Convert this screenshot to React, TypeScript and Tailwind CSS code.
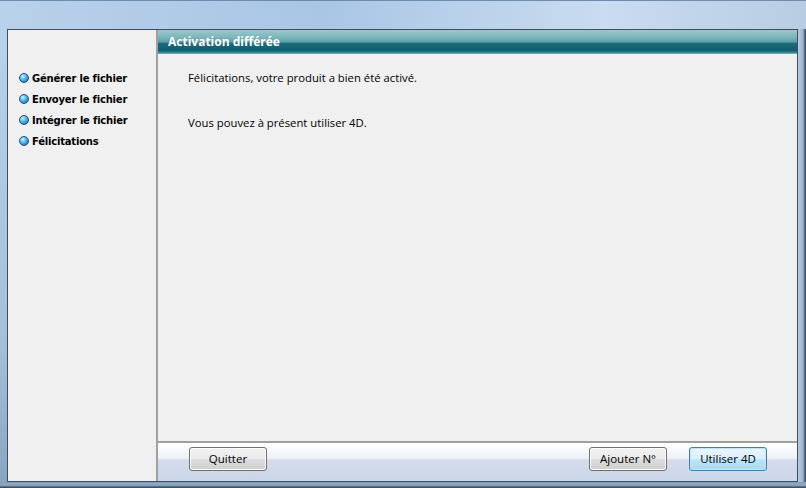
import React from 'react';

const steps = ['Générer le fichier', 'Envoyer le fichier', 'Intégrer le fichier', 'Félicitations'];

function Bullet() {
  return (
    <span className="w-[10px] h-[10px] rounded-full border border-[#2a4c74] bg-[radial-gradient(circle_at_35%_30%,#d6f4ff_0%,#5fc4f4_35%,#1f86d0_75%,#1a5a9a_100%)] shrink-0" />
  );
}

function WinButton({ label, focused }: { label: string; focused?: boolean }) {
  return (
    <button
      type="button"
      className={
        'w-[78px] h-[24px] rounded-[3px] border text-[11.5px] text-black leading-none flex items-center justify-center ' +
        (focused
          ? 'border-[#3c7fb1] bg-[linear-gradient(to_bottom,#eaf6fd_0%,#d9f0fc_50%,#bee6fd_50%,#a7d9f5_100%)] shadow-[inset_0_0_0_1px_#c4e5f6]'
          : 'border-[#707070] bg-[linear-gradient(to_bottom,#f2f2f2_0%,#ebebeb_50%,#dddddd_50%,#cfcfcf_100%)] shadow-[inset_0_0_0_1px_#fcfcfc]')
      }
      style={{ fontFamily: '"Open Sans", "Noto Sans", sans-serif' }}
    >
      {label}
    </button>
  );
}

export default function App() {
  return (
    <div className="w-[806px] h-[488px] flex flex-col bg-[linear-gradient(to_right,#b9d1ea_0%,#a9c6e6_40%,#c9dcf0_75%,#b8cde4_100%)] overflow-hidden">
      {/* title bar (cropped) */}
      <div className="h-[29px] shrink-0 border-t border-[#6d8db0]" />

      <div className="flex-1 flex min-h-0">
        <div className="w-[7px] shrink-0 bg-[linear-gradient(to_bottom,#b9d1ea,#a6bed8_70%,#8aa5c2)]" />

        {/* client area */}
        <div className="flex-1 flex border border-[#3f4d5e] bg-[#f0f0f0] min-w-0">
          {/* sidebar */}
          <div
            className="w-[150px] shrink-0 pt-[42px] pl-[11px] flex flex-col gap-[9px] border-r-2 border-[#a0a0a0]"
            style={{ fontFamily: '"DejaVu Sans", "Liberation Sans", sans-serif' }}
          >
            {steps.map((s) => (
              <div key={s} className="flex items-center gap-[3px] h-[12px]">
                <Bullet />
                <span className="text-[10px] font-bold text-black tracking-[-0.2px] whitespace-nowrap">{s}</span>
              </div>
            ))}
          </div>

          {/* main */}
          <div className="flex-1 flex flex-col min-w-0">
            <div className="h-[24px] shrink-0 bg-[linear-gradient(to_bottom,#9cc8cc_0%,#7db6bb_30%,#5a9ea6_50%,#1d6c7e_55%,#135a6e_85%,#3e8f98_95%,#7cc0c4_100%)] flex items-center pl-[10px]">
              <span
                className="text-white font-bold text-[12px]"
                style={{ fontFamily: '"Open Sans", "Noto Sans", sans-serif' }}
              >
                Activation différée
              </span>
            </div>

            <div
              className="flex-1 pl-[30px] pt-[15px] text-[11.3px] text-black flex flex-col gap-[28px]"
              style={{ fontFamily: '"Open Sans", "Noto Sans", sans-serif' }}
            >
              <p className="leading-[17px]">Félicitations, votre produit a bien été activé.</p>
              <p className="leading-[17px]">Vous pouvez à présent utiliser 4D.</p>
            </div>

            <div className="h-[40px] shrink-0 border-t-2 border-[#a0a0a0] bg-[linear-gradient(to_bottom,#ffffff_0%,#eef1f8_40%,#d4dcec_45%,#ccd6ea_100%)] flex items-center pl-[31px] pr-[30px] pb-[6px]">
              <WinButton label="Quitter" />
              <div className="flex-1" />
              <div className="flex gap-[22px]">
                <WinButton label="Ajouter N°" />
                <WinButton label="Utiliser 4D" focused />
              </div>
            </div>
          </div>
        </div>

        <div className="w-[8px] shrink-0 bg-[linear-gradient(to_right,#b7cce2,#9fb6cf_60%,#5f7a96_80%,#2e3c4c)]" />
      </div>

      <div className="h-[6px] shrink-0 bg-[linear-gradient(to_bottom,#7f9bb8,#92adc8_50%,#2e3c4c)]" />
    </div>
  );
}
